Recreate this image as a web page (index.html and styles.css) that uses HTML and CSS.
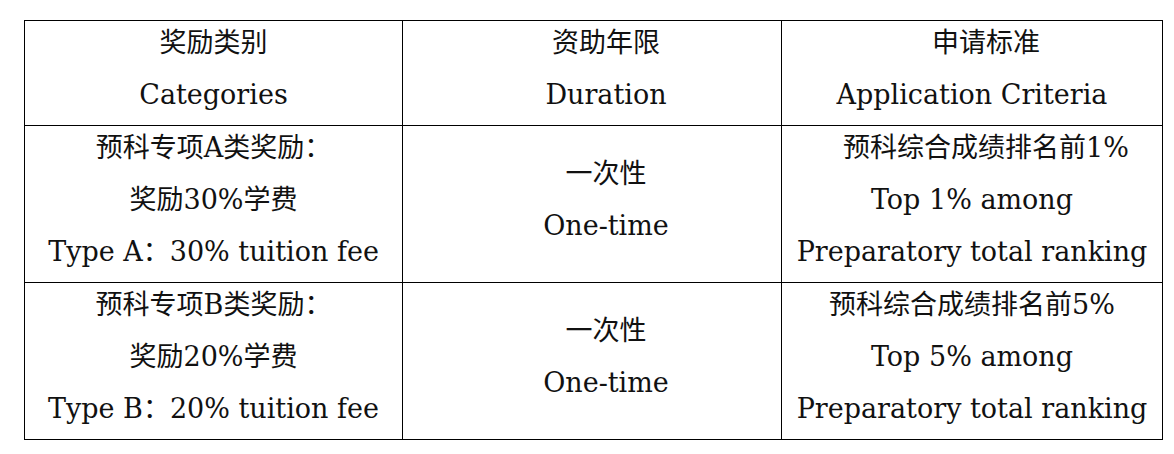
FILE: index.html
```html
<!DOCTYPE html>
<html lang="zh">
<head>
<meta charset="utf-8">
<link rel="stylesheet" href="styles.css">
</head>
<body>
<table class="award">
  <colgroup><col class="c1"><col class="c2"><col class="c3"></colgroup>
  <tr class="head">
    <td><div class="ln">奖励类别</div><div class="ln">Categories</div></td>
    <td class="mid"><div class="ln">资助年限</div><div class="ln">Duration</div></td>
    <td><div class="ln lead">申请标准</div><div class="ln">Application Criteria</div></td>
  </tr>
  <tr class="row">
    <td><div class="ln">预科专项A类奖励：</div><div class="ln">奖励30%学费</div><div class="ln">Type A：30% tuition fee</div></td>
    <td class="mid"><div class="ln">一次性</div><div class="ln">One-time</div></td>
    <td><div class="ln lead">预科综合成绩排名前1%</div><div class="ln">Top 1% among</div><div class="ln">Preparatory total ranking</div></td>
  </tr>
  <tr class="row">
    <td><div class="ln">预科专项B类奖励：</div><div class="ln">奖励20%学费</div><div class="ln">Type B：20% tuition fee</div></td>
    <td class="mid"><div class="ln">一次性</div><div class="ln">One-time</div></td>
    <td><div class="ln">预科综合成绩排名前5%</div><div class="ln">Top 5% among</div><div class="ln">Preparatory total ranking</div></td>
  </tr>
</table>
</body>
</html>
```

FILE: styles.css
```css
html, body {
  margin: 0;
  padding: 0;
  background: #fff;
}
body {
  padding: 20px 0 0 24px;
  font-family: "DejaVu Serif", "Noto Sans CJK SC", serif;
  font-size: 27px;
  color: #111;
}
.award {
  border-collapse: collapse;
  table-layout: fixed;
  width: 1138px;
}
.c1 { width: 378px; }
.c2 { width: 379px; }
.c3 { width: 381px; }
.award td {
  border: 1px solid #000;
  text-align: center;
  vertical-align: middle;
  padding: 0;
  white-space: nowrap;
}
.award td.mid {
  padding-left: 28px;
}
.ln {
  height: 52px;
  line-height: 44px;
}
.lead {
  padding-left: 28px;
}
.head td { height: 104px; }
.row td { height: 156px; }
```
